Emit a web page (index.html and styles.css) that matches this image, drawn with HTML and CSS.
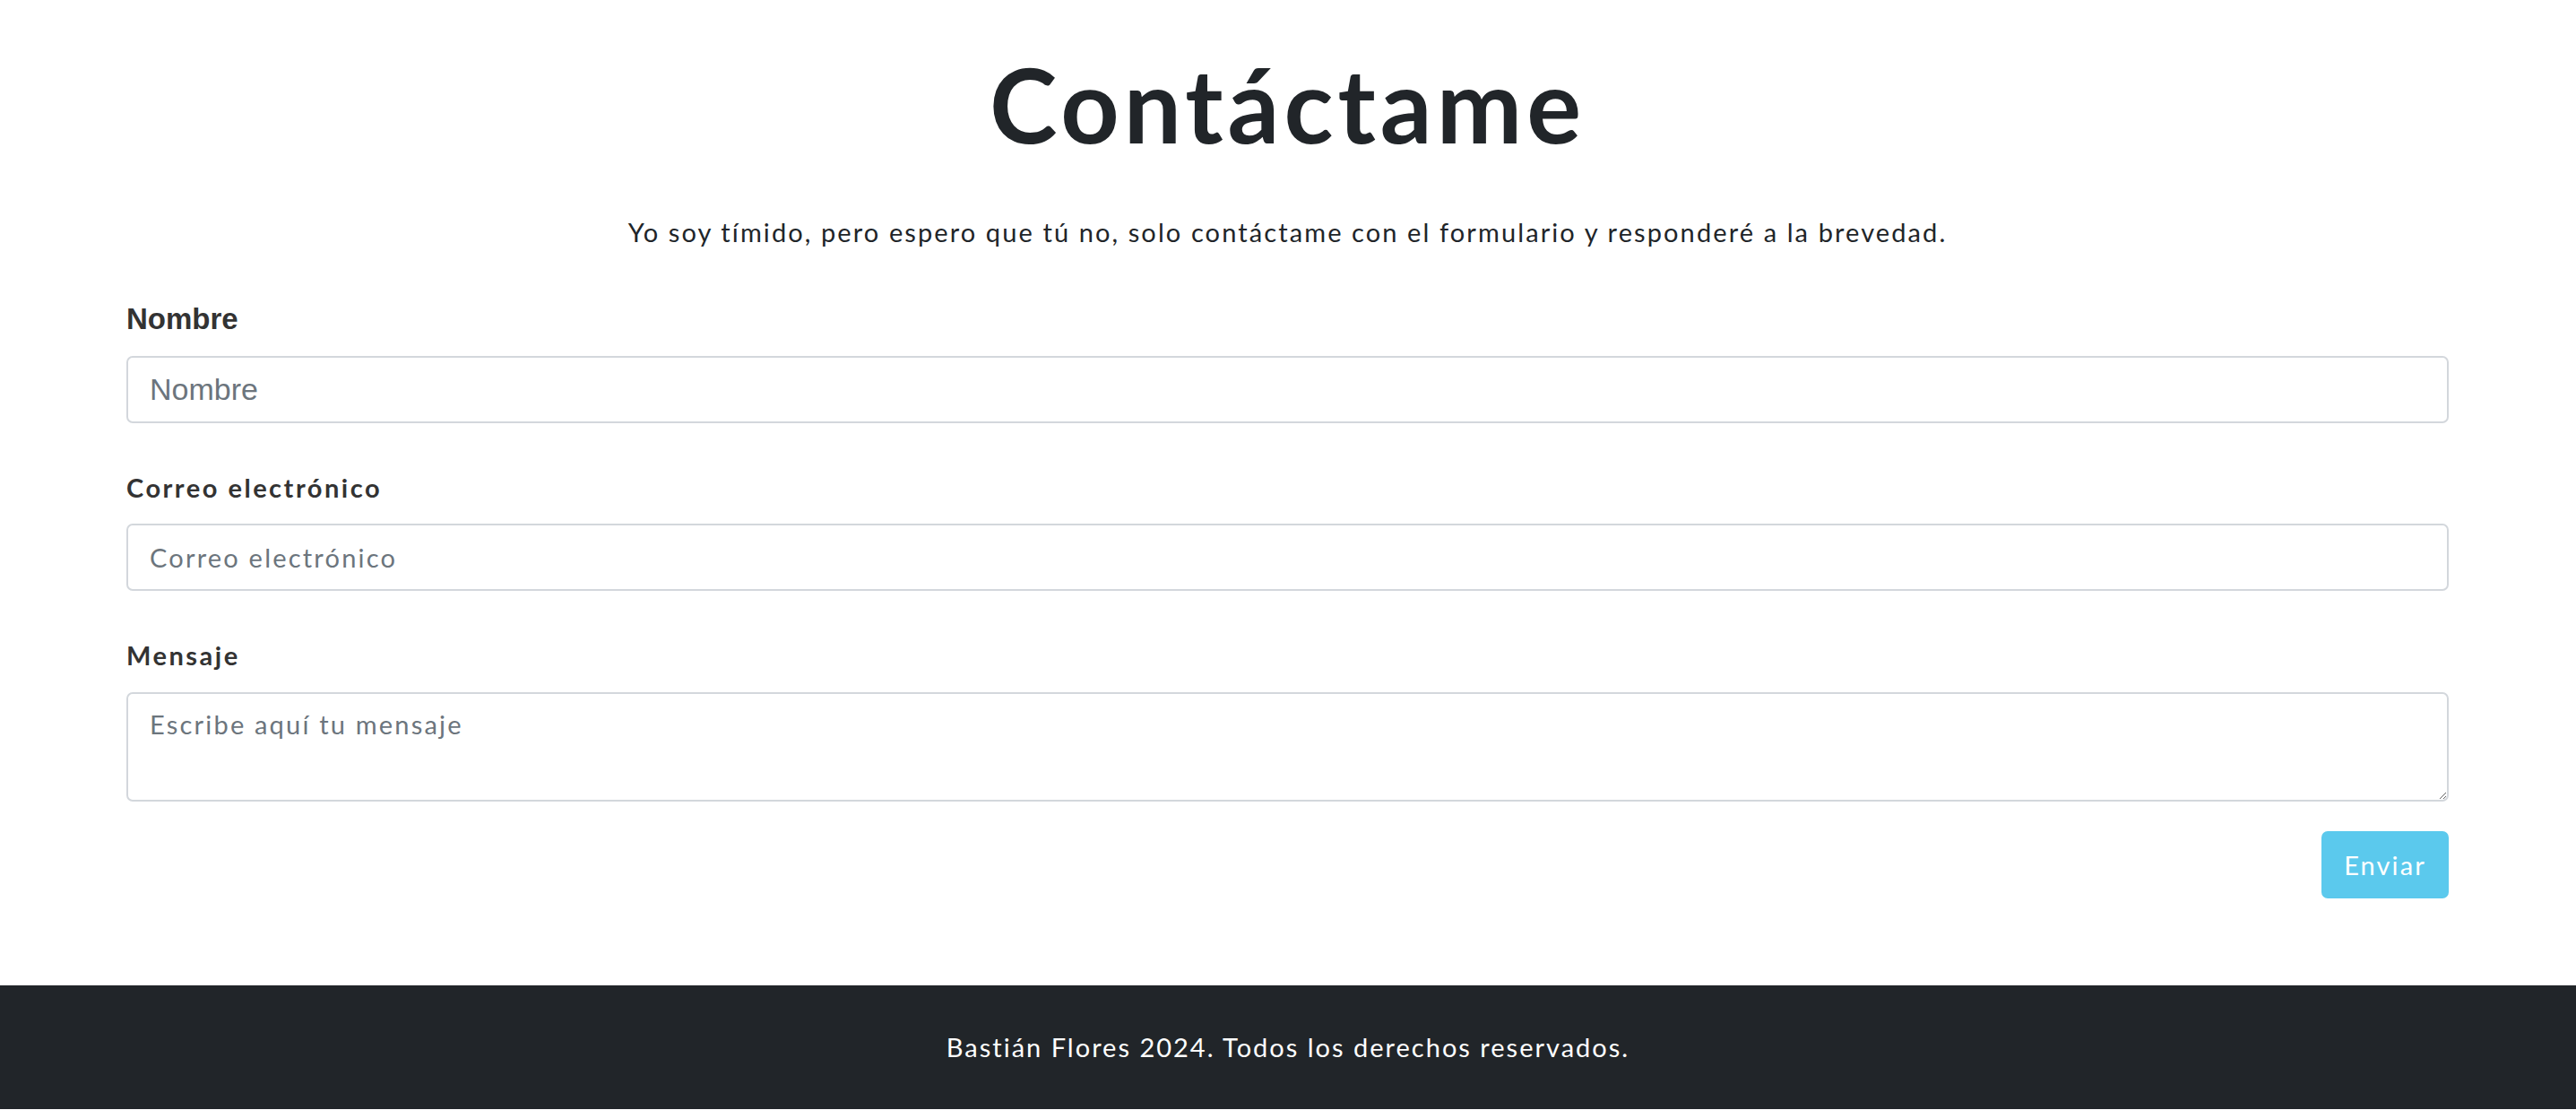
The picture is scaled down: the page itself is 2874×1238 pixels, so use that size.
FILE: index.html
```html
<!DOCTYPE html>
<html lang="es">
<head>
<meta charset="utf-8">
<title>Contáctame</title>
<link rel="stylesheet" href="styles.css">
</head>
<body>
<main class="contact">
  <h1 class="title">Contáctame</h1>
  <p class="lead">Yo soy tímido, pero espero que tú no, solo contáctame con el formulario y responderé a la brevedad.</p>
  <form class="form">
    <div class="group">
      <label class="label label-alt" for="nombre">Nombre</label>
      <input class="field field-alt" id="nombre" type="text" placeholder="Nombre">
    </div>
    <div class="group">
      <label class="label" for="correo">Correo electrónico</label>
      <input class="field" id="correo" type="email" placeholder="Correo electrónico">
    </div>
    <div class="group group-last">
      <label class="label" for="mensaje">Mensaje</label>
      <textarea class="field area" id="mensaje" placeholder="Escribe aquí tu mensaje"></textarea>
    </div>
    <div class="actions">
      <button class="btn" type="submit" disabled>Enviar</button>
    </div>
  </form>
</main>
<footer class="footer">
  <p class="footer-text">Bastián Flores 2024. Todos los derechos reservados.</p>
</footer>
</body>
</html>
```
FILE: styles.css
```css
* { box-sizing: border-box; }
html, body { margin: 0; padding: 0; }
body {
  font-family: "Lato", "Noto Sans", sans-serif;
  color: #212529;
  background: #fff;
  font-size: 29px;
  line-height: 1.5;
}
.contact {
  padding: 48px 142px 97px 141px;
  display: flex;
  flex-direction: column;
}
.title {
  margin: 0;
  text-align: center;
  font-size: 114px;
  line-height: 1.2;
  font-weight: 700;
  letter-spacing: 5px;
  color: #212529;
}
.lead {
  margin: 52px 0 0;
  text-align: center;
  font-size: 29px;
  letter-spacing: 2.1px;
  color: #212529;
}
.form {
  margin-top: 54px;
  display: flex;
  flex-direction: column;
}
.group {
  display: flex;
  flex-direction: column;
  margin-bottom: 50px;
}
.group-last { margin-bottom: 33px; }
.label {
  font-weight: 700;
  font-size: 29px;
  letter-spacing: 2.5px;
  color: #333;
  margin-bottom: 19px;
}
.label-alt {
  font-family: "Liberation Sans", Arial, sans-serif;
  font-size: 33px;
  line-height: 43.5px;
  letter-spacing: 0;
}
.field {
  height: 75px;
  width: 100%;
  border: 2px solid #d3d7dc;
  border-radius: 7px;
  padding: 0 24px;
  font-family: "Lato", "Noto Sans", sans-serif;
  font-size: 29px;
  letter-spacing: 2.2px;
  color: #212529;
  background: #fff;
}
.field::placeholder { color: #6c757d; }
.field-alt {
  font-family: "Liberation Sans", Arial, sans-serif;
  font-size: 34px;
  letter-spacing: 0;
}
.area {
  height: 122px;
  padding: 12px 24px;
  line-height: 1.5;
  resize: vertical;
}
.actions {
  display: flex;
  justify-content: flex-end;
}
.btn {
  width: 142px;
  height: 75px;
  border: 0;
  border-radius: 7px;
  background: #5bc9ed;
  color: #fff;
  font-family: "Lato", "Noto Sans", sans-serif;
  font-size: 29px;
  letter-spacing: 2.1px;
  padding: 0;
}
.footer {
  background: #212529;
  height: 138px;
  display: flex;
  align-items: center;
  justify-content: center;
}
.footer-text {
  margin: 0;
  color: #fff;
  font-size: 29px;
  letter-spacing: 2px;
}
```
